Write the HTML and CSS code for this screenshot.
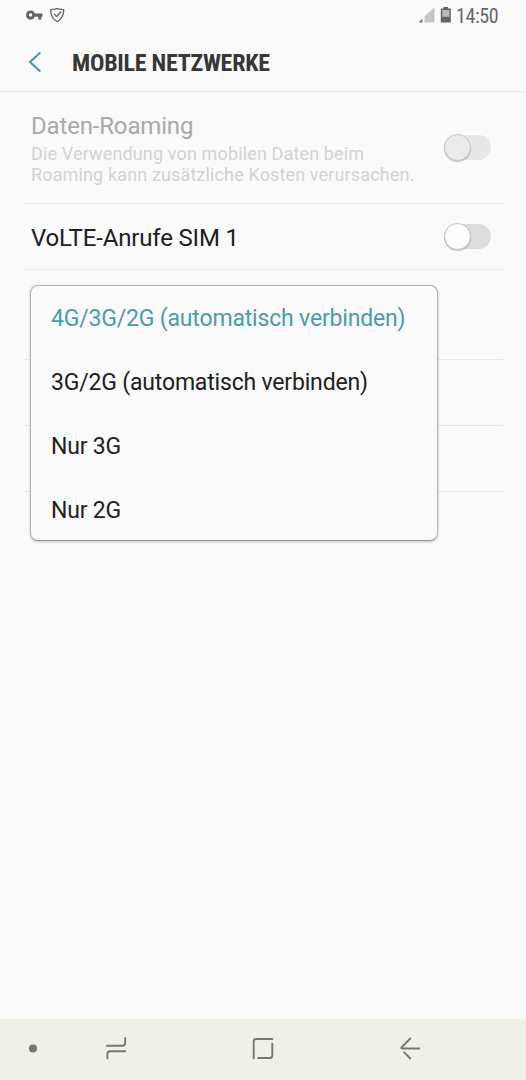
FILE: index.html
```html
<!DOCTYPE html>
<html lang="de">
<head>
<meta charset="utf-8">
<title>Mobile Netzwerke</title>
<link rel="stylesheet" href="styles.css">
</head>
<body>
<div class="screen">
  <div class="statusbar">
    <svg class="status-left" width="44" height="30" viewBox="0 0 44 30">
      <path fill="#646464" fill-rule="evenodd" d="M4.600 10.400a4.600 4.600 0 0 1 4.300 3.100H16.500v3.300h-1.100v2.600h-3.200v-2.600H8.900a4.600 4.600 0 1 1-4.300-6.400zM4.600 13.300a1.700 1.700 0 1 0 0 3.400a1.700 1.700 0 0 0 0-3.400z"/>
      <path fill="none" stroke="#646464" stroke-width="1.300" stroke-linejoin="round" d="M31.200 8.600c-2 .5-4.200 1-6.500 1.100 0 5 1.500 9.300 6.500 12 5-2.700 6.500-7 6.500-12-2.300-.1-4.500-.6-6.500-1.100z"/>
      <path fill="none" stroke="#646464" stroke-width="1.300" d="M28 13.900l2.700 2.600 4.300-5"/>
    </svg>
    <div class="status-right">
      <svg width="34" height="30" viewBox="0 0 34 30">
        <path fill="#c5c5c5" d="M15.500 7v15.500H5.500v-6z"/>
        <path fill="#5f5f5f" d="M3.300 18.800v3.700H-.2z"/>
        <path fill="#636363" d="M24.500 7h4.500v1.500h2.800v14H21.800v-14h2.700z"/>
        <path fill="#bababa" d="M23.300 10h7v6.800h-7z"/>
      </svg>
      <span class="clock">14:50</span>
    </div>
  </div>
  <header class="header">
    <svg class="back" width="14" height="22" viewBox="0 0 14 22"><path fill="none" stroke="#4597b0" stroke-width="2" d="M12.300 1.500L2 11l10.300 9.500"/></svg>
    <h1 class="title">MOBILE NETZWERKE</h1>
  </header>
  <main class="list">
    <div class="row row-roaming disabled">
      <div class="texts">
        <div class="name">Daten-Roaming</div>
        <div class="desc">Die Verwendung von mobilen Daten beim<br>Roaming kann zusätzliche Kosten verursachen.</div>
      </div>
      <div class="toggle"><div class="thumb"></div></div>
    </div>
    <div class="row row-volte">
      <div class="name">VoLTE-Anrufe SIM 1</div>
      <div class="toggle"><div class="thumb"></div></div>
    </div>
    <div class="row row-mode"></div>
    <div class="row row-plain"></div>
    <div class="row row-plain"></div>
    <div class="menu">
      <div class="option selected">4G/3G/2G (automatisch verbinden)</div>
      <div class="option">3G/2G (automatisch verbinden)</div>
      <div class="option">Nur 3G</div>
      <div class="option">Nur 2G</div>
    </div>
  </main>
  <nav class="navbar">
    <svg width="526" height="61" viewBox="0 0 526 61" fill="none" stroke="#777771" stroke-width="1.900" stroke-linecap="round" stroke-linejoin="round">
      <circle cx="33" cy="29.500" r="4" fill="#777771" stroke="none"/>
      <path d="M107 26.800h15.500q2.700 0 2.700-2.700v-5.200M125.200 32.200h-15.100q-2.700 0-2.700 2.700v4.600"/>
      <path d="M253.700 39.200V22.400q0-2.400 2.400-2.400h16.200M272.300 24.800v11.800q0 2.400-2.400 2.400H258.200"/>
      <path d="M410.300 19.500l-8.600 8.700q-1.200 1.300.6 1.300h17M404.200 33.300l6.100 6.200"/>
    </svg>
  </nav>
</div>
</body>
</html>
```
FILE: styles.css
```css
* { box-sizing: border-box; }
body {
  margin: 0;
  background: #fafafa;
  font-family: Roboto, "Liberation Sans", sans-serif;
  color: #202020;
}
.screen {
  width: 526px;
  height: 1080px;
  display: flex;
  flex-direction: column;
  overflow: hidden;
}
.statusbar {
  height: 31px;
  display: flex;
  justify-content: space-between;
  padding-left: 26px;
}
.status-right {
  display: flex;
  width: 107px;
}
.status-right svg { flex: none; }
.clock {
  margin-left: 3px;
  font-family: "Roboto Condensed", Roboto, sans-serif;
  font-stretch: condensed;
  font-size: 20px;
  letter-spacing: -0.4px;
  line-height: 32px;
  color: #666;
}
.header {
  height: 61px;
  border-bottom: 1px solid #e3e3e3;
  display: flex;
  align-items: center;
  padding-left: 28px;
}
.back { margin-top: 1px; }
.title {
  margin: 4px 0 0 30px;
  font-family: "Roboto Condensed", Roboto, sans-serif;
  font-stretch: condensed;
  font-size: 24px;
  letter-spacing: -0.27px;
  font-weight: 700;
  color: #373737;
  white-space: nowrap;
}
.list {
  flex: 1;
  position: relative;
  padding: 0 23px 0 23px;
}
.row {
  display: flex;
  justify-content: space-between;
  align-items: center;
  border-bottom: 1px solid #e8e8e8;
  padding: 0 12px 0 8px;
}
.row-roaming { height: 112px; }
.row-volte { height: 66px; border-color: #ececec; }
.row-mode { height: 90px; }
.row-plain { height: 66px; }
.name {
  font-size: 24px;
  line-height: 28px;
  letter-spacing: -0.17px;
  padding-top: 2px;
  white-space: nowrap;
}
.desc {
  font-size: 18px;
  line-height: 21px;
  letter-spacing: 0.14px;
  color: #d2d2d2;
  white-space: nowrap;
  margin-top: 3px;
}
.disabled .name { color: #a9a9a9; }
.toggle {
  width: 47px;
  height: 25px;
  border-radius: 13px;
  background: #dcdcdc;
  display: flex;
  align-items: center;
}
.thumb {
  width: 27px;
  height: 27px;
  flex: none;
  border-radius: 50%;
  background: #fdfdfd;
  border: 1px solid #c6c6c6;
  box-shadow: 0 1px 1px rgba(0, 0, 0, 0.22);
}
.disabled .toggle { background: #e8e8e8; }
.disabled .thumb { background: #ebebeb; }
.menu {
  position: absolute;
  left: 30px;
  top: 193px;
  width: 408px;
  height: 256px;
  border: 1px solid #b4b4b4;
  border-bottom-color: #999;
  border-radius: 8px;
  background: #fafafa;
  box-shadow: 0 1px 3px rgba(0, 0, 0, 0.22);
}
.option {
  height: 64px;
  line-height: 66px;
  padding-left: 20px;
  font-size: 23px;
  letter-spacing: -0.18px;
  white-space: nowrap;
}
.selected { color: #4a9bb1; }
.navbar {
  height: 61px;
  background: #f0f0e6;
}
.navbar svg { display: block; }
```
